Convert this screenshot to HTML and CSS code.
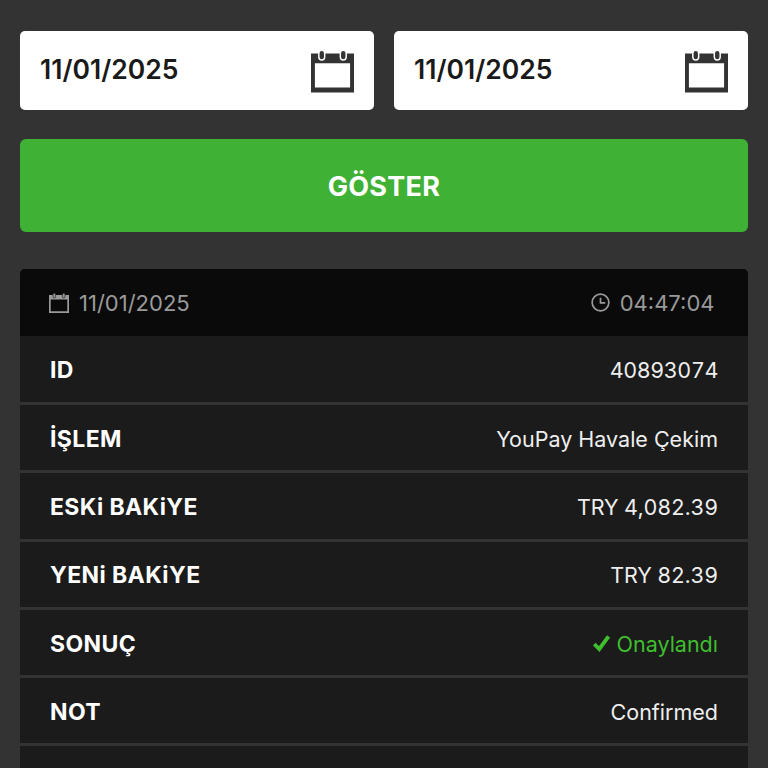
FILE: index.html
```html
<!DOCTYPE html>
<html lang="tr">
<head>
<meta charset="utf-8">
<title>Hesap Hareketleri</title>
<link rel="stylesheet" href="styles.css">
</head>
<body>
<main class="page">
  <section class="dates">
    <div class="date-field">
      <span>11/01/2025</span>
      <svg class="cal" viewBox="0 0 44 44"><path fill="#333" fill-rule="evenodd" d="M0 4h44v40H0zM4 14v25h36V14z"/><rect x="8" y="0.800" width="6" height="10" rx="3" fill="#333" stroke="#fff" stroke-width="1.500"/><rect x="30" y="0.800" width="6" height="10" rx="3" fill="#333" stroke="#fff" stroke-width="1.500"/></svg>
    </div>
    <div class="date-field">
      <span>11/01/2025</span>
      <svg class="cal" viewBox="0 0 44 44"><path fill="#333" fill-rule="evenodd" d="M0 4h44v40H0zM4 14v25h36V14z"/><rect x="8" y="0.800" width="6" height="10" rx="3" fill="#333" stroke="#fff" stroke-width="1.500"/><rect x="30" y="0.800" width="6" height="10" rx="3" fill="#333" stroke="#fff" stroke-width="1.500"/></svg>
    </div>
  </section>
  <button class="show-btn" type="button">GÖSTER</button>
  <section class="card">
    <header class="card-head">
      <div class="meta">
        <svg class="meta-cal" viewBox="0 0 20 20"><path fill="#9a9a9a" fill-rule="evenodd" d="M0 2h20v18H0zM1.700 6.500v11.800h16.600V6.500z"/><rect x="4" y="0.300" width="2.600" height="4.500" rx="1.200" fill="#9a9a9a" stroke="#0a0a0a" stroke-width=".6"/><rect x="13.400" y="0.300" width="2.600" height="4.500" rx="1.200" fill="#9a9a9a" stroke="#0a0a0a" stroke-width=".6"/></svg>
        <span>11/01/2025</span>
      </div>
      <div class="meta meta-time">
        <svg class="meta-clock" viewBox="0 0 20 20"><circle cx="10" cy="10" r="8.800" fill="none" stroke="#9a9a9a" stroke-width="1.800"/><path fill="none" stroke="#9a9a9a" stroke-width="1.800" d="M10 5v5.500h5"/></svg>
        <span>04:47:04</span>
      </div>
    </header>
    <div class="row"><span class="label">ID</span><span class="value num">40893074</span></div>
    <div class="row"><span class="label">İŞLEM</span><span class="value">YouPay Havale Çekim</span></div>
    <div class="row"><span class="label">ESKi BAKiYE</span><span class="value money">TRY 4,082.39</span></div>
    <div class="row"><span class="label">YENi BAKiYE</span><span class="value money">TRY 82.39</span></div>
    <div class="row"><span class="label">SONUÇ</span><span class="value ok"><svg class="check" viewBox="0 0 17 17"><path fill="none" stroke="#3fbe2e" stroke-width="3.800" d="M1.300 9l5 5L15.500 1.500"/></svg>Onaylandı</span></div>
    <div class="row"><span class="label">NOT</span><span class="value">Confirmed</span></div>
    <div class="row"><span class="label"></span><span class="value"></span></div>
  </section>
</main>
</body>
</html>
```
FILE: styles.css
```css
* { box-sizing: border-box; }
html, body { margin: 0; height: 768px; overflow: hidden; background: #333; }
body { font-family: Inter, "Liberation Sans", sans-serif; }
.page { padding: 31px 20px 0; display: flex; flex-direction: column; height: 768px; overflow: hidden; }
.dates { display: grid; grid-template-columns: 1fr 1fr; gap: 20px; flex: none; }
.date-field {
  height: 79px; background: #fff; border-radius: 5px; color: #1a1a1a;
  display: flex; align-items: center; justify-content: space-between;
  padding: 0 20px; font-size: 26.5px; font-weight: 600;
}
.date-field span { padding-bottom: 4px; }
.cal { width: 43px; height: 44px; flex: none; }
.show-btn {
  margin-top: 29px; height: 93px; width: 100%; border: 0; border-radius: 6px; flex: none;
  background: #3fb134; color: #fff; font: 700 27px Inter, "Liberation Sans", sans-serif;
  letter-spacing: .3px; padding: 2px 0 0;
}
.card { margin-top: 37px; border-radius: 5px 5px 0 0; background: #1b1b1b; flex: none; overflow: hidden; }
.card-head {
  height: 67px; background: #0a0a0a; color: #9a9a9a; font-size: 22px;
  display: flex; align-items: center; justify-content: space-between;
  padding: 0 33.5px 0 29px;
}
.meta { display: flex; align-items: center; gap: 10px; }
.meta-cal { width: 20px; height: 20px; }
.meta-clock { width: 19px; height: 19px; }
.row {
  height: 68.3px; padding: 2px 30px 0; display: flex; align-items: center; justify-content: space-between;
  border-bottom: 3px solid #333; background: #1b1b1b;
}
.card-head + .row { height: 69px; }
.label { color: #fff; font-size: 23px; font-weight: 700; letter-spacing: .4px; }
.value { color: #eee; font-size: 21.5px; }
.num, .money { font-variant-numeric: tabular-nums; }
.num { letter-spacing: -.4px; }
.money { letter-spacing: -.15px; }
.ok { color: #3fbe2e; display: flex; align-items: center; gap: 7px; }
.check { width: 17px; height: 17px; }
```
